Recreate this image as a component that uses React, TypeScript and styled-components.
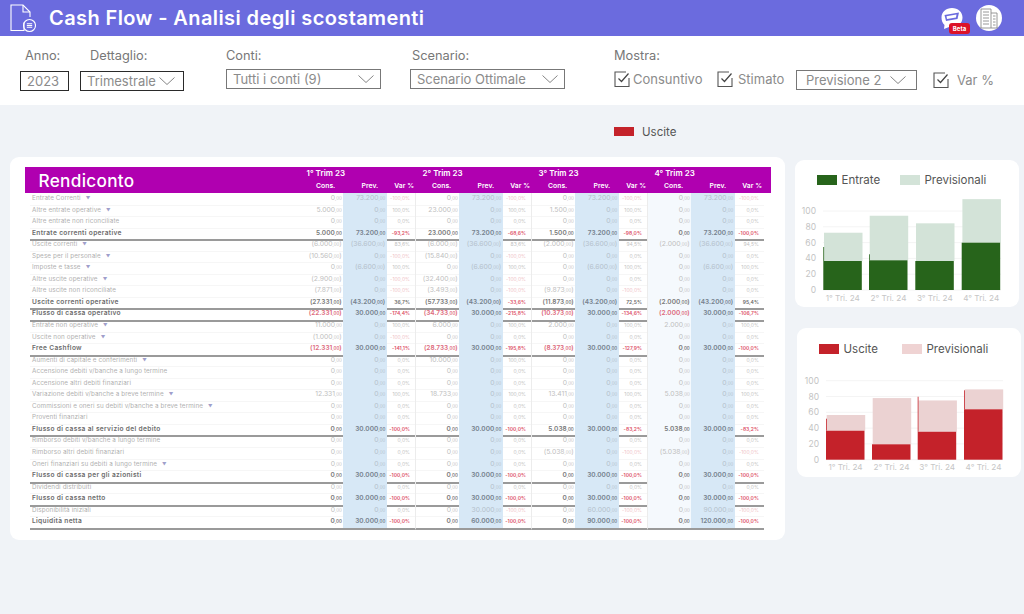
import React from 'react'
import styled, { createGlobalStyle } from 'styled-components'

const GlobalStyle = createGlobalStyle`
  html, body {
    margin: 0;
    padding: 0;
    background: #f0f3f7;
  }
  * { box-sizing: border-box; }
`

// [cons, prev, var] for each quarter. Negative amounts show in brackets.
type Cell = [string, string, string]
type RowData = { label: string; arrow?: boolean; bold?: boolean; line?: boolean; redCons?: boolean; cells: Cell[] }

const Z: Cell = ['0', '0', '0,0%']
const zeros = [Z, Z, Z, Z]
const C30: Cell = ['0', '30.000', '-100,0%']

const ROWS: RowData[] = [
  { label: 'Entrate Correnti', arrow: true, cells: [['0', '73.200', '-100,0%'], ['0', '73.200', '-100,0%'], ['0', '73.200', '-100,0%'], ['0', '73.200', '-100,0%']] },
  { label: 'Altre entrate operative', arrow: true, cells: [['5.000', '0', '100,0%'], ['23.000', '0', '100,0%'], ['1.500', '0', '100,0%'], Z] },
  { label: 'Altre entrate non riconciliate', cells: zeros },
  { label: 'Entrate correnti operative', bold: true, line: true, cells: [['5.000', '73.200', '-93,2%'], ['23.000', '73.200', '-68,6%'], ['1.500', '73.200', '-98,0%'], ['0', '73.200', '-100,0%']] },
  { label: 'Uscite correnti', arrow: true, cells: [['(6.000)', '(36.600)', '83,6%'], ['(6.000)', '(36.600)', '83,6%'], ['(2.000)', '(36.600)', '94,5%'], ['(2.000)', '(36.600)', '94,5%']] },
  { label: 'Spese per il personale', arrow: true, cells: [['(10.560)', '0', '-100,0%'], ['(15.840)', '0', '-100,0%'], Z, Z] },
  { label: 'Imposte e tasse', arrow: true, cells: [['0', '(6.600)', '100,0%'], ['0', '(6.600)', '100,0%'], ['0', '(6.600)', '100,0%'], ['0', '(6.600)', '100,0%']] },
  { label: 'Altre uscite operative', arrow: true, cells: [['(2.900)', '0', '-100,0%'], ['(32.400)', '0', '-100,0%'], Z, Z] },
  { label: 'Altre uscite non riconciliate', cells: [['(7.871)', '0', '-100,0%'], ['(3.493)', '0', '-100,0%'], ['(9.873)', '0', '-100,0%'], Z] },
  { label: 'Uscite correnti operative', bold: true, line: true, cells: [['(27.331)', '(43.200)', '36,7%'], ['(57.733)', '(43.200)', '-33,6%'], ['(11.873)', '(43.200)', '72,5%'], ['(2.000)', '(43.200)', '95,4%']] },
  { label: 'Flusso di cassa operativo', bold: true, line: true, redCons: true, cells: [['(22.331)', '30.000', '-174,4%'], ['(34.733)', '30.000', '-215,8%'], ['(10.373)', '30.000', '-134,6%'], ['(2.000)', '30.000', '-106,7%']] },
  { label: 'Entrate non operative', arrow: true, cells: [['11.000', '0', '100,0%'], ['6.000', '0', '100,0%'], ['2.000', '0', '100,0%'], ['2.000', '0', '100,0%']] },
  { label: 'Uscite non operative', arrow: true, cells: [['(1.000)', '0', '-100,0%'], Z, Z, Z] },
  { label: 'Free Cashflow', bold: true, line: true, redCons: true, cells: [['(12.331)', '30.000', '-141,1%'], ['(28.733)', '30.000', '-195,8%'], ['(8.373)', '30.000', '-127,9%'], C30] },
  { label: 'Aumenti di capitale e conferimenti', arrow: true, cells: [Z, ['10.000', '0', '100,0%'], Z, Z] },
  { label: 'Accensione debiti v/banche a lungo termine', cells: zeros },
  { label: 'Accensione altri debiti finanziari', cells: zeros },
  { label: 'Variazione debiti v/banche a breve termine', arrow: true, cells: [['12.331', '0', '100,0%'], ['18.733', '0', '100,0%'], ['13.411', '0', '100,0%'], ['5.038', '0', '100,0%']] },
  { label: 'Commissioni e oneri su debiti v/banche a breve termine', arrow: true, cells: zeros },
  { label: 'Proventi finanziari', cells: zeros },
  { label: 'Flusso di cassa al servizio del debito', bold: true, line: true, cells: [C30, C30, ['5.038', '30.000', '-83,2%'], ['5.038', '30.000', '-83,2%']] },
  { label: 'Rimborso debiti v/banche a lungo termine', cells: zeros },
  { label: 'Rimborso altri debiti finanziari', cells: [Z, Z, ['(5.038)', '0', '-100,0%'], ['(5.038)', '0', '-100,0%']] },
  { label: 'Oneri finanziari su debiti a lungo termine', arrow: true, cells: zeros },
  { label: 'Flusso di cassa per gli azionisti', bold: true, line: true, cells: [C30, C30, C30, C30] },
  { label: 'Dividendi distribuiti', cells: zeros },
  { label: 'Flusso di cassa netto', bold: true, line: true, cells: [C30, C30, C30, C30] },
  { label: 'Disponibilità iniziali', cells: [Z, ['0', '30.000', '-100,0%'], ['0', '60.000', '-100,0%'], ['0', '90.000', '-100,0%']] },
  { label: 'Liquidità netta', bold: true, line: true, cells: [C30, ['0', '60.000', '-100,0%'], ['0', '90.000', '-100,0%'], ['0', '120.000', '-100,0%']] },
]

const QUARTERS = ['1° Trim 23', '2° Trim 23', '3° Trim 23', '4° Trim 23']

const GREEN_BARS = [
  { x: 28.3, dark: 36.7, total: 72.5, stub: 14 },
  { x: 74, dark: 37.6, total: 94, stub: 6 },
  { x: 120.3, dark: 36.7, total: 84.4, stub: 0 },
  { x: 166.7, dark: 59.9, total: 115, stub: 0 },
]
const RED_BARS = [
  { x: 29, dark: 36.7, total: 56.6, stub: 12 },
  { x: 75, dark: 19.5, total: 78, stub: 0 },
  { x: 120.7, dark: 35.4, total: 75, stub: 35 },
  { x: 167, dark: 63.8, total: 89, stub: 19 },
]

const Page = styled.div`
  width: 1024px;
  height: 614px;
  overflow: hidden;
  background: #f0f3f7;
  font-family: Inter, "Liberation Sans", sans-serif;
`

const Header = styled.header`
  height: 36px;
  display: flex;
  align-items: center;
  padding: 0 22px 0 10px;
  background: #6b6bde;
`

const Title = styled.h1`
  margin: 0 0 0 13px;
  font-size: 20px;
  font-weight: 600;
  letter-spacing: 0.4px;
  color: #fff;
  flex: 1;
`

const HeaderActions = styled.div`
  display: flex;
  align-items: center;
  gap: 12px;
`

const ChatBadge = styled.div`
  position: relative;
  width: 24px;
  height: 24px;
`

const Beta = styled.span`
  position: absolute;
  left: 9px;
  top: 17px;
  width: 21px;
  height: 11px;
  border-radius: 3px;
  background: #dc1228;
  color: #fff;
  font-size: 6px;
  font-weight: 700;
  line-height: 11px;
  text-align: center;
`

const Avatar = styled.div`
  width: 26px;
  height: 26px;
  border-radius: 50%;
  background: #fff;
  display: flex;
  align-items: center;
  justify-content: center;
`

const FilterBar = styled.section`
  height: 69px;
  padding: 12px 0 0 20px;
  background: #fff;
  display: flex;
  align-items: flex-start;
`

const FilterGroup = styled.div<{ $left?: number }>`
  margin-left: ${({ $left }) => $left || 0}px;
`

const FilterLabel = styled.div<{ $indent?: number }>`
  height: 16px;
  margin-left: ${({ $indent }) => $indent || 0}px;
  font-size: 12.8px;
  line-height: 16px;
  color: #777;
`

const SelectBox = styled.div<{ $width: number; $top: number; $dark?: boolean; $pad?: number; $padRight?: number }>`
  width: ${({ $width }) => $width}px;
  height: 20px;
  margin-top: ${({ $top }) => $top}px;
  padding: 0 ${({ $padRight }) => $padRight || 6}px 0 ${({ $pad }) => $pad || 6}px;
  display: flex;
  align-items: center;
  justify-content: space-between;
  border: 1px solid ${({ $dark }) => ($dark ? '#2a2a2a' : '#777')};
  font-size: 13px;
  color: #8b8b8b;
  background: #fff;
  white-space: nowrap;
`

const ShowRow = styled.div`
  display: flex;
  align-items: center;
  margin-top: 6px;
`

const CheckItem = styled.div<{ $width: number; $gap: number; $left?: number; $lift?: number }>`
  width: ${({ $width }) => $width}px;
  margin-left: ${({ $left }) => $left || 0}px;
  margin-top: ${({ $lift }) => -($lift || 0)}px;
  display: flex;
  align-items: center;
  gap: ${({ $gap }) => $gap}px;
  font-size: 13px;
  color: #8b8b8b;
  white-space: nowrap;
`

const BoxSvg = styled.svg`
  flex-shrink: 0;
`

const Main = styled.main`
  padding: 22px 0 0 10px;
`

const TopLegend = styled.div`
  height: 9px;
  margin-left: 604px;
  display: flex;
  align-items: center;
  gap: 8px;
  font-size: 11.5px;
  color: #555;
`

const Swatch = styled.span<{ $color: string }>`
  display: block;
  width: 20px;
  height: 9.5px;
  flex-shrink: 0;
  background: ${({ $color }) => $color};
`

const Content = styled.div`
  display: flex;
  align-items: flex-start;
  margin-top: 21px;
`

const TableCard = styled.section`
  width: 775px;
  height: 383px;
  padding: 10px 14.5px;
  background: #fff;
  border-radius: 9px;
`

const Banner = styled.div`
  width: 746px;
  height: 26px;
  display: flex;
  background: #b000b0;
  color: #fff;
`

const BannerTitle = styled.div`
  width: 275.5px;
  padding-left: 14px;
  font-size: 17.2px;
  font-weight: 500;
  letter-spacing: 0.3px;
  line-height: 28px;
`

const QuarterHead = styled.div`
  width: 116px;
  display: grid;
  grid-template-columns: 43.3px 44px 28.7px;
  grid-template-rows: 12px 14px;
`

const QuarterName = styled.div`
  grid-column: 1 / span 3;
  padding-left: 6.5px;
  font-size: 8px;
  font-weight: 600;
  line-height: 12px;
`

const ColHead = styled.div<{ $right: number }>`
  padding-right: ${({ $right }) => $right}px;
  font-size: 6.8px;
  font-weight: 600;
  line-height: 14px;
  text-align: right;
  white-space: nowrap;
`

const Rows = styled.div`
  margin-left: 5.5px;
`

const Row = styled.div`
  height: 11.55px;
  display: grid;
  grid-template-columns: 270px repeat(4, 43.3px 44px 28.7px);
`

const cellLine = ({ $line }: { $line?: boolean }) =>
  $line ? 'border-bottom: 2px solid #9a9a9a;' : 'border-bottom: 1px solid #f6f6f6;'

const Label = styled.div<{ $bold?: boolean; $line?: boolean }>`
  padding-left: 2px;
  font-size: ${({ $bold }) => ($bold ? 6.6 : 6.3)}px;
  font-weight: ${({ $bold }) => ($bold ? 600 : 400)};
  letter-spacing: ${({ $bold }) => ($bold ? 0.33 : 0.11)}px;
  line-height: 10.5px;
  color: ${({ $bold }) => ($bold ? '#6c6c6c' : '#b0b0b0')};
  white-space: nowrap;
  ${cellLine}
`

const Arrow = styled.span`
  margin-left: 5px;
  font-size: 4.5px;
  color: #9f9fcb;
`

const Amount = styled.div<{ $bold?: boolean; $line?: boolean; $red?: boolean; $plan?: boolean; $tint?: boolean }>`
  padding-right: ${({ $plan }) => ($plan ? 2 : 1.5)}px;
  font-size: ${({ $bold }) => ($bold ? 6.5 : 6.8)}px;
  font-weight: ${({ $bold }) => ($bold ? 600 : 400)};
  line-height: 10.5px;
  text-align: right;
  white-space: nowrap;
  color: ${({ $bold, $red, $plan }) => {
    if ($red) return '#dd6a7c'
    if ($bold) return $plan ? '#75818d' : '#7a7a7a'
    return $plan ? '#b4c0cb' : '#c0c0c0'
  }};
  background: ${({ $plan, $tint }) => ($plan ? '#d7e8f6' : $tint ? '#f5f9fd' : 'transparent')};
  ${cellLine}
`

const Cents = styled.small`
  font-size: 4.4px;
`

const VarCell = styled.div<{ $bold?: boolean; $line?: boolean; $red?: boolean; $edge?: boolean }>`
  padding-right: 5px;
  font-size: 5px;
  font-weight: ${({ $bold }) => ($bold ? 600 : 400)};
  line-height: 10.5px;
  text-align: right;
  white-space: nowrap;
  color: ${({ $bold, $red }) => {
    if ($red) return $bold ? '#dd5068' : '#f0bfc7'
    return $bold ? '#6a6a6a' : '#c2c2c2'
  }};
  border-right: ${({ $edge }) => ($edge ? '1px solid #ececec' : '0')};
  ${cellLine}
`

const ChartColumn = styled.aside`
  width: 228px;
  margin: 3px 0 0 10px;
  display: flex;
  flex-direction: column;
  gap: 21px;
`

const ChartCard = styled.div<{ $shift: number; $pad: number }>`
  width: 224px;
  margin-left: ${({ $shift }) => $shift}px;
  padding-top: ${({ $pad }) => $pad}px;
  background: #fff;
  border-radius: 9px;
`

const ChartLegend = styled.div`
  height: 10px;
  padding-left: 22px;
  display: flex;
  align-items: center;
  font-size: 11.5px;
  color: #555;
`

const LegendItem = styled.div<{ $width: number }>`
  width: ${({ $width }) => $width}px;
  display: flex;
  align-items: center;
  gap: 4.5px;
`

const ChartSvg = styled.svg`
  display: block;
  font-family: Inter, "Liberation Sans", sans-serif;
`

function DocIcon () {
  return (
    <svg width='26' height='30' viewBox='0 0 26 30' fill='none' stroke='#fff' strokeWidth='1.1'>
      <path d='M14 19.5V27.5H1V2H13L20 9V14' />
      <path d='M13 2V9H20' />
      <circle cx='19.5' cy='22.5' r='6' />
      <path d='M16.8 20.7H22.2M16.8 22.5H22.2M16.8 24.3H22.2' />
    </svg>
  )
}

function ChatIcon () {
  return (
    <svg width='24' height='24' viewBox='0 0 24 24'>
      <path d='M12 2C6 2 1.500 6 1.500 11.500C1.500 14.500 2.500 17 4.500 19L4 23L9 21C10 21.300 11 21.500 12 21.500C18 21.500 22.500 17 22.500 11.500C22.500 6 18 2 12 2Z' fill='#fff' />
      <path d='M4.500 9L19 6.500L17.500 13L6 15Z' fill='#6b6bde' />
      <path d='M6.500 10.200L16.500 8.500L16 11.500L7 13Z' fill='#fff' />
    </svg>
  )
}

function BuildingIcon () {
  return (
    <svg width='18' height='22' viewBox='0 0 18 22' fill='none' stroke='#8c8c8c' strokeWidth='0.9'>
      <path d='M1 21V2H11V21M11 6H17V21M0 21H18' />
      <path d='M3 5H9M3 8H9M3 11H9M3 14H9M3 17H9M13 9H15.500M13 12H15.500M13 15H15.500M13 18H15.500' />
    </svg>
  )
}

function Chevron () {
  return (
    <svg width='16' height='8' viewBox='0 0 16 8' fill='none' stroke='#666' strokeWidth='0.8'>
      <path d='M0.500 0.500L8 7.500L15.500 0.500' />
    </svg>
  )
}

function CheckBox () {
  return (
    <BoxSvg width='16' height='16' viewBox='0 0 16 16' fill='none'>
      <path d='M12 1H1V15.500H15V7' stroke='#555' strokeWidth='1.100' />
      <path d='M4.500 7.500L7.500 10.500L14.500 2.500' stroke='#444' strokeWidth='1.200' />
    </BoxSvg>
  )
}

function Money ({ value, bold, plan, line, tint, red }: { value: string; bold?: boolean; plan?: boolean; line?: boolean; tint?: boolean; red?: boolean }) {
  const negative = value.startsWith('(')
  const digits = value.replace(/[()]/g, '')
  return (
    <Amount $bold={bold} $plan={plan} $line={line} $tint={tint} $red={red}>
      {negative ? '(' : ''}{digits}<Cents>,00</Cents>{negative ? ')' : ''}
    </Amount>
  )
}

function TableRow ({ row }: { row: RowData }) {
  return (
    <Row>
      <Label $bold={row.bold} $line={row.line}>
        {row.label}{row.arrow && <Arrow>▼</Arrow>}
      </Label>
      {row.cells.map((cell, i) => (
        <React.Fragment key={i}>
          <Money value={cell[0]} bold={row.bold} line={row.line} tint={i === 3} red={row.redCons && cell[0].startsWith('(')} />
          <Money value={cell[1]} bold={row.bold} line={row.line} plan />
          <VarCell $bold={row.bold} $line={row.line} $red={cell[2].startsWith('-')} $edge={i < 3}>
            {cell[2]}
          </VarCell>
        </React.Fragment>
      ))}
    </Row>
  )
}

type BarsProps = {
  bars: typeof GREEN_BARS
  dark: string
  light: string
  height: number
  base: number
  axisX: number
}

function BarChart ({ bars, dark, light, height, base, axisX }: BarsProps) {
  const unit = 0.79
  return (
    <ChartSvg width='224' height={height} viewBox={`0 0 224 ${height}`}>
      {[0, 20, 40, 60, 80, 100].map(tick => (
        <g key={tick}>
          <line x1={axisX + 7} x2='206' y1={base - tick * unit} y2={base - tick * unit} stroke='#f4f4f4' />
          <text x={axisX} y={base - tick * unit + 3} textAnchor='end' fontSize='8.5' fill='#c4c4c4'>{tick}</text>
        </g>
      ))}
      {bars.map((bar, i) => (
        <g key={i}>
          <rect x={bar.x + 0.7} y={base - bar.total * unit} width='38.500' height={(bar.total - bar.dark) * unit} fill={light} />
          <rect x={bar.x} y={base - bar.dark * unit} width='38.500' height={bar.dark * unit} fill={dark} />
          {bar.stub > 0 && <rect x={bar.x} y={base - (bar.dark * unit) - bar.stub} width='0.800' height={bar.stub} fill={dark} />}
          <text x={bar.x + 19.500} y={base + 10.500} textAnchor='middle' fontSize='8.200' fill='#c6c6c6'>{i + 1}° Tri. 24</text>
        </g>
      ))}
    </ChartSvg>
  )
}

export default function App () {
  return (
    <Page>
      <GlobalStyle />
      <Header>
        <DocIcon />
        <Title>Cash Flow - Analisi degli scostamenti</Title>
        <HeaderActions>
          <ChatBadge>
            <ChatIcon />
            <Beta>Beta</Beta>
          </ChatBadge>
          <Avatar><BuildingIcon /></Avatar>
        </HeaderActions>
      </Header>

      <FilterBar>
        <FilterGroup>
          <FilterLabel $indent={5}>Anno:</FilterLabel>
          <SelectBox $width={49} $top={7} $dark>2023</SelectBox>
        </FilterGroup>
        <FilterGroup $left={11}>
          <FilterLabel $indent={10}>Dettaglio:</FilterLabel>
          <SelectBox $width={104} $top={7} $dark $padRight={8}>Trimestrale <Chevron /></SelectBox>
        </FilterGroup>
        <FilterGroup $left={42}>
          <FilterLabel>Conti:</FilterLabel>
          <SelectBox $width={155} $top={5}>Tutti i conti (9) <Chevron /></SelectBox>
        </FilterGroup>
        <FilterGroup $left={29}>
          <FilterLabel $indent={2}>Scenario:</FilterLabel>
          <SelectBox $width={155} $top={5}>Scenario Ottimale <Chevron /></SelectBox>
        </FilterGroup>
        <FilterGroup $left={49}>
          <FilterLabel>Mostra:</FilterLabel>
          <ShowRow>
            <CheckItem $width={103} $gap={3} $lift={2}><CheckBox />Consuntivo</CheckItem>
            <CheckItem $width={79} $gap={5} $lift={2}><CheckBox />Stimato</CheckItem>
            <SelectBox $width={121} $top={0} $pad={9} $padRight={10}>Previsione 2 <Chevron /></SelectBox>
            <CheckItem $width={60} $gap={8} $left={16}><CheckBox />Var %</CheckItem>
          </ShowRow>
        </FilterGroup>
      </FilterBar>

      <Main>
        <TopLegend>
          <Swatch $color='#c4222a' />
          Uscite
        </TopLegend>
        <Content>
          <TableCard>
            <Banner>
              <BannerTitle>Rendiconto</BannerTitle>
              {QUARTERS.map(q => (
                <QuarterHead key={q}>
                  <QuarterName>{q}</QuarterName>
                  <ColHead $right={8}>Cons.</ColHead>
                  <ColHead $right={9}>Prev.</ColHead>
                  <ColHead $right={2}>Var %</ColHead>
                </QuarterHead>
              ))}
            </Banner>
            <Rows>
              {ROWS.map(row => <TableRow key={row.label} row={row} />)}
            </Rows>
          </TableCard>

          <ChartColumn>
            <ChartCard $shift={0} $pad={15}>
              <ChartLegend>
                <LegendItem $width={83}><Swatch $color='#27641b' />Entrate</LegendItem>
                <LegendItem $width={100}><Swatch $color='#d3e3d8' />Previsionali</LegendItem>
              </ChartLegend>
              <BarChart bars={GREEN_BARS} dark='#27641b' light='#d3e3d8' height={122} base={105} axisX={21} />
            </ChartCard>
            <ChartCard $shift={2} $pad={16}>
              <ChartLegend>
                <LegendItem $width={83}><Swatch $color='#c4222a' />Uscite</LegendItem>
                <LegendItem $width={100}><Swatch $color='#efd3d3' />Previsionali</LegendItem>
              </ChartLegend>
              <BarChart bars={RED_BARS} dark='#c4222a' light='#ebd2d2' height={123} base={105.700} axisX={22} />
            </ChartCard>
          </ChartColumn>
        </Content>
      </Main>
    </Page>
  )
}
